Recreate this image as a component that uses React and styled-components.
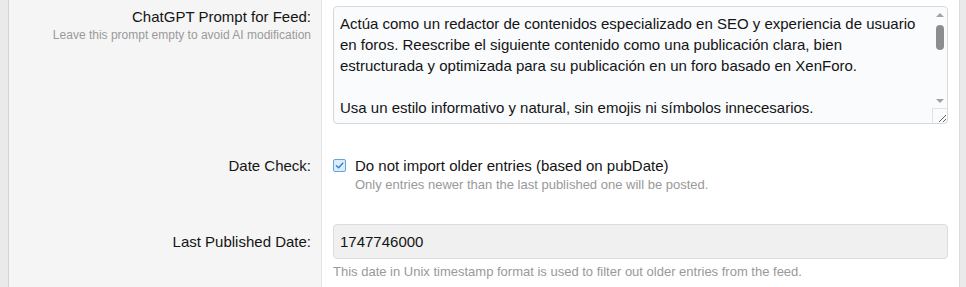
import React from "react";
import styled, { createGlobalStyle } from "styled-components";

const GlobalStyle = createGlobalStyle`
  html, body {
    margin: 0;
    padding: 0;
    height: 100%;
    background: #eaeaea;
    font-family: "Liberation Sans", Arial, sans-serif;
    color: #141414;
  }
  #root {
    height: 100%;
  }
`;

const Block = styled.div`
  box-sizing: border-box;
  display: flex;
  flex-direction: column;
  min-height: 100%;
  margin: 0 6px 0 8px;
  background: #fff;
  border-left: 1px solid #d3d3d3;
  border-right: 1px solid #dcdcdc;
`;

const Row = styled.div`
  display: grid;
  grid-template-columns: 313px 1fr;
  flex: ${(p) => (p.$fill ? 1 : "none")};
`;

const Term = styled.div`
  box-sizing: border-box;
  background: #f5f5f5;
  border-right: 1px solid #e4e4e4;
  padding: ${(p) => p.$top}px 10px ${(p) => p.$bottom}px 0;
  text-align: right;
`;

const Label = styled.div`
  font-size: 15px;
  line-height: 21px;
  padding-top: ${(p) => p.$offset || 0}px;
`;

const TermHint = styled.div`
  font-size: 12px;
  line-height: 16px;
  color: #9a9a9a;
`;

const Field = styled.div`
  box-sizing: border-box;
  padding: ${(p) => p.$top}px 11px ${(p) => p.$bottom}px 11px;
  min-width: 0;
`;

const AreaWrap = styled.div`
  position: relative;
`;

const TextArea = styled.textarea`
  display: block;
  box-sizing: border-box;
  width: 100%;
  height: 118px;
  margin: 0;
  padding: 6px 21px 0 6px;
  border: 1px solid #d8d8d8;
  border-radius: 4px;
  background: #f9fbfd;
  font-family: "Liberation Sans", Arial, sans-serif;
  font-size: 15px;
  line-height: 21px;
  color: #141414;
  resize: vertical;
  outline: none;
  overflow: hidden;
`;

/* painted scrollbar laid over the textarea (the capture hides native ones) */
const Scrollbar = styled.div`
  position: absolute;
  top: 1px;
  right: 1px;
  bottom: 16px;
  width: 15px;
  display: flex;
  flex-direction: column;
  pointer-events: none;
`;

const ScrollButton = styled.div`
  flex: none;
  height: 15px;
  display: flex;
  align-items: center;
  justify-content: center;

  &::before {
    content: "";
    width: 0;
    height: 0;
    border-left: 4px solid transparent;
    border-right: 4px solid transparent;
    ${(p) =>
      p.$down
        ? "border-top: 4px solid #a3a3a3;"
        : "border-bottom: 4px solid #a3a3a3;"}
  }
`;

const Track = styled.div`
  flex: 1;
  display: flex;
  justify-content: center;
`;

const Thumb = styled.div`
  width: 8px;
  height: 25px;
  margin-top: 3px;
  border-radius: 4px;
  background: #8d8d8d;
`;

const Corner = styled.div`
  position: absolute;
  right: 1px;
  bottom: 1px;
  width: 14px;
  height: 14px;
  border-left: 1px solid #e2e2e2;
  border-top: 1px solid #e2e2e2;
  pointer-events: none;
`;

const Input = styled.input`
  display: block;
  box-sizing: border-box;
  width: 100%;
  height: 35px;
  margin: 0;
  padding: 0 6px;
  border: 1px solid #dcdcdc;
  border-radius: 4px;
  background: #f0f0f0;
  font-family: "Liberation Sans", Arial, sans-serif;
  font-size: 15px;
  color: #141414;
  outline: none;
`;

const CheckRow = styled.label`
  display: flex;
  align-items: flex-start;
  gap: 9px;
  font-size: 15px;
  line-height: 21px;
  cursor: pointer;
`;

const Box = styled.span`
  box-sizing: border-box;
  flex: none;
  width: 13px;
  height: 13px;
  margin-top: 4px;
  border: 1px solid #5aa9e6;
  border-radius: 2px;
  background: #ddecf8;
  display: flex;
  align-items: center;
  justify-content: center;

  svg {
    width: 9px;
    height: 9px;
  }
`;

const Explain = styled.div`
  font-size: 13px;
  line-height: 18px;
  color: #999;
  margin-top: ${(p) => p.$gap || 0}px;
  padding-left: ${(p) => p.$indent || 0}px;
`;

const promptText = `Actúa como un redactor de contenidos especializado en SEO y experiencia de usuario en foros. Reescribe el siguiente contenido como una publicación clara, bien estructurada y optimizada para su publicación en un foro basado en XenForo.

Usa un estilo informativo y natural, sin emojis ni símbolos innecesarios.
Mantén la información original y utiliza títulos, párrafos breves y listas.
Incluye una introducción breve y una conclusión que invite a participar en el tema.`;

export default function App() {
  return (
    <>
      <GlobalStyle />
      <Block>
        <Row>
          <Term $top={6} $bottom={16}>
            <Label>ChatGPT Prompt for Feed:</Label>
            <TermHint>Leave this prompt empty to avoid AI modification</TermHint>
          </Term>
          <Field $top={6} $bottom={16}>
            <AreaWrap>
              <TextArea defaultValue={promptText} spellCheck={false} />
              <Scrollbar>
                <ScrollButton />
                <Track>
                  <Thumb />
                </Track>
                <ScrollButton $down />
              </Scrollbar>
              <Corner />
            </AreaWrap>
          </Field>
        </Row>
        <Row>
          <Term $top={15} $bottom={16}>
            <Label>Date Check:</Label>
          </Term>
          <Field $top={15} $bottom={15}>
            <CheckRow>
              <Box>
                <svg viewBox="0 0 10 10" fill="none">
                  <path
                    d="M1.5 5.2 L4 7.6 L8.6 2.4"
                    stroke="#2f86d3"
                    strokeWidth="1.6"
                    strokeLinecap="round"
                    strokeLinejoin="round"
                  />
                </svg>
              </Box>
              <span>Do not import older entries (based on pubDate)</span>
            </CheckRow>
            <Explain $indent={22}>
              Only entries newer than the last published one will be posted.
            </Explain>
          </Field>
        </Row>
        <Row $fill>
          <Term $top={15} $bottom={16}>
            <Label $offset={7}>Last Published Date:</Label>
          </Term>
          <Field $top={15} $bottom={16}>
            <Input type="text" readOnly value="1747746000" />
            <Explain $gap={4}>
              This date in Unix timestamp format is used to filter out older
              entries from the feed.
            </Explain>
          </Field>
        </Row>
      </Block>
    </>
  );
}
